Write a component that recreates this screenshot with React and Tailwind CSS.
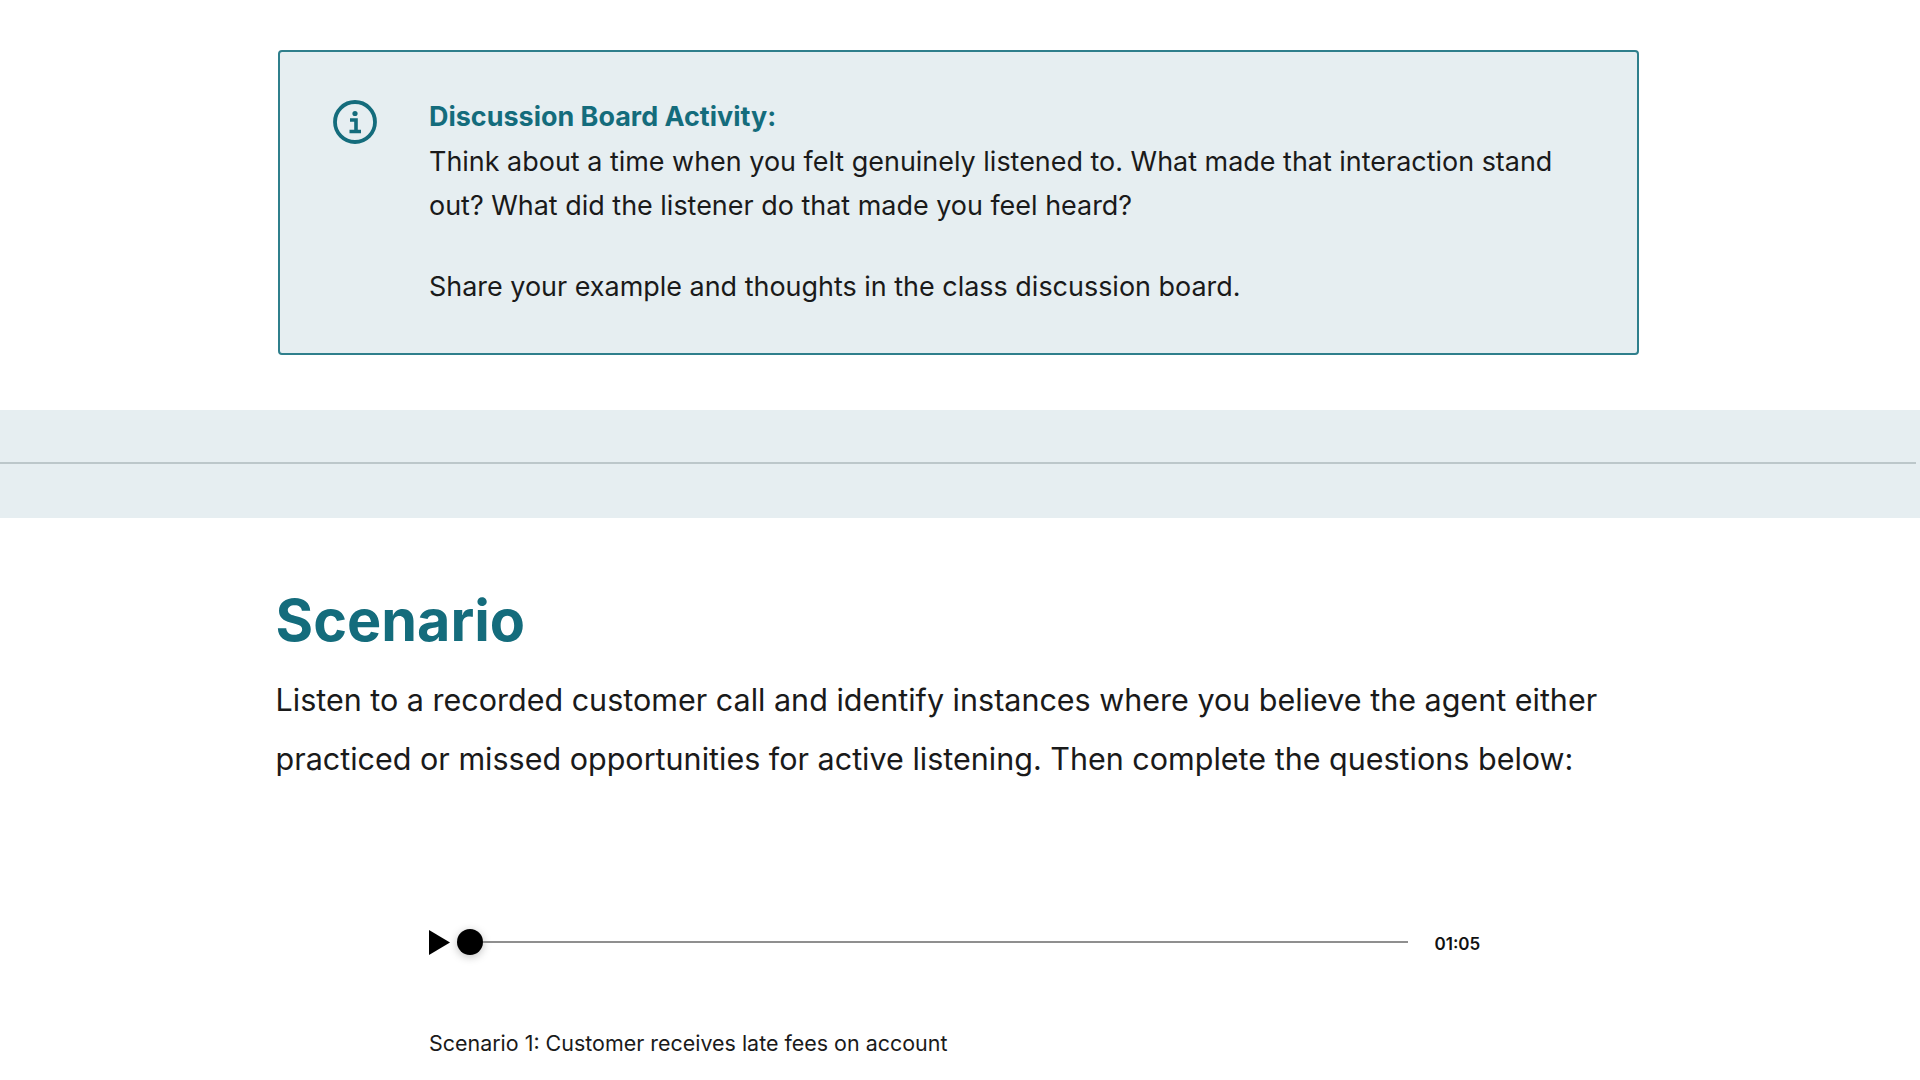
export default function App() {
  return (
    <div className="w-[1920px] h-[1080px] overflow-hidden bg-white font-['Inter',sans-serif] text-[#1a1a1a]">
      <div className="pt-[50px] pl-[278px]">
        <div className="w-[1361px] h-[305px] border-2 border-[#2f7f8c] rounded-[4px] bg-[#e6eef1] flex">
          <div className="w-[149px] shrink-0 pl-[53px] pt-[48px]">
            <svg width="44" height="44" viewBox="0 0 44 44" fill="none">
              <circle cx="22" cy="22" r="20" stroke="#146c7c" strokeWidth="3.8" />
              <circle cx="22" cy="13.5" r="2.6" fill="#146c7c" />
              <path d="M17 20h6v11M16.5 31.5h11.5" stroke="#146c7c" strokeWidth="3.6" />
            </svg>
          </div>
          <div className="pt-[43px] text-[26.95px] leading-[44.5px]">
            <div className="font-bold text-[#146c7c]">Discussion Board Activity:</div>
            <p>Think about a time when you felt genuinely listened to. What made that interaction stand<br />out? What did the listener do that made you feel heard?</p>
            <p className="mt-[36px]">Share your example and thoughts in the class discussion board.</p>
          </div>
        </div>
      </div>
      <div className="mt-[55px] h-[108px] bg-[#e6eef1] flex items-center">
        <div className="w-[1916px] h-[2px] bg-[#bcc7ca] -translate-y-[1px]"></div>
      </div>
      <div className="pl-[275.5px]">
        <h2 className="mt-[69px] text-[57.5px] leading-[66px] font-bold text-[#146c7c]">Scenario</h2>
        <p className="mt-[17px] text-[30.5px] leading-[59px]">Listen to a recorded customer call and identify instances where you believe the agent either<br />practiced or missed opportunities for active listening. Then complete the questions below:</p>
        <div className="mt-[134px] pl-[153px] flex items-center h-[40px]">
          <svg width="21" height="25" viewBox="0 0 21 25" className="shrink-0"><path d="M0 0L21 12.5L0 25Z" fill="#000" /></svg>
          <div className="ml-[7px] w-[26px] h-[26px] rounded-full bg-black shadow-[0_2px_8px_rgba(0,0,0,0.25)] shrink-0"></div>
          <div className="w-[925px] h-[2px] bg-[#8f8f8f]"></div>
          <div className="ml-[27px] mt-[6px] text-[17px] font-semibold text-[#111]">01:05</div>
        </div>
        <p className="mt-[65px] ml-[153.5px] text-[21.45px] leading-[32px]">Scenario 1: Customer receives late fees on account</p>
      </div>
    </div>
  );
}
